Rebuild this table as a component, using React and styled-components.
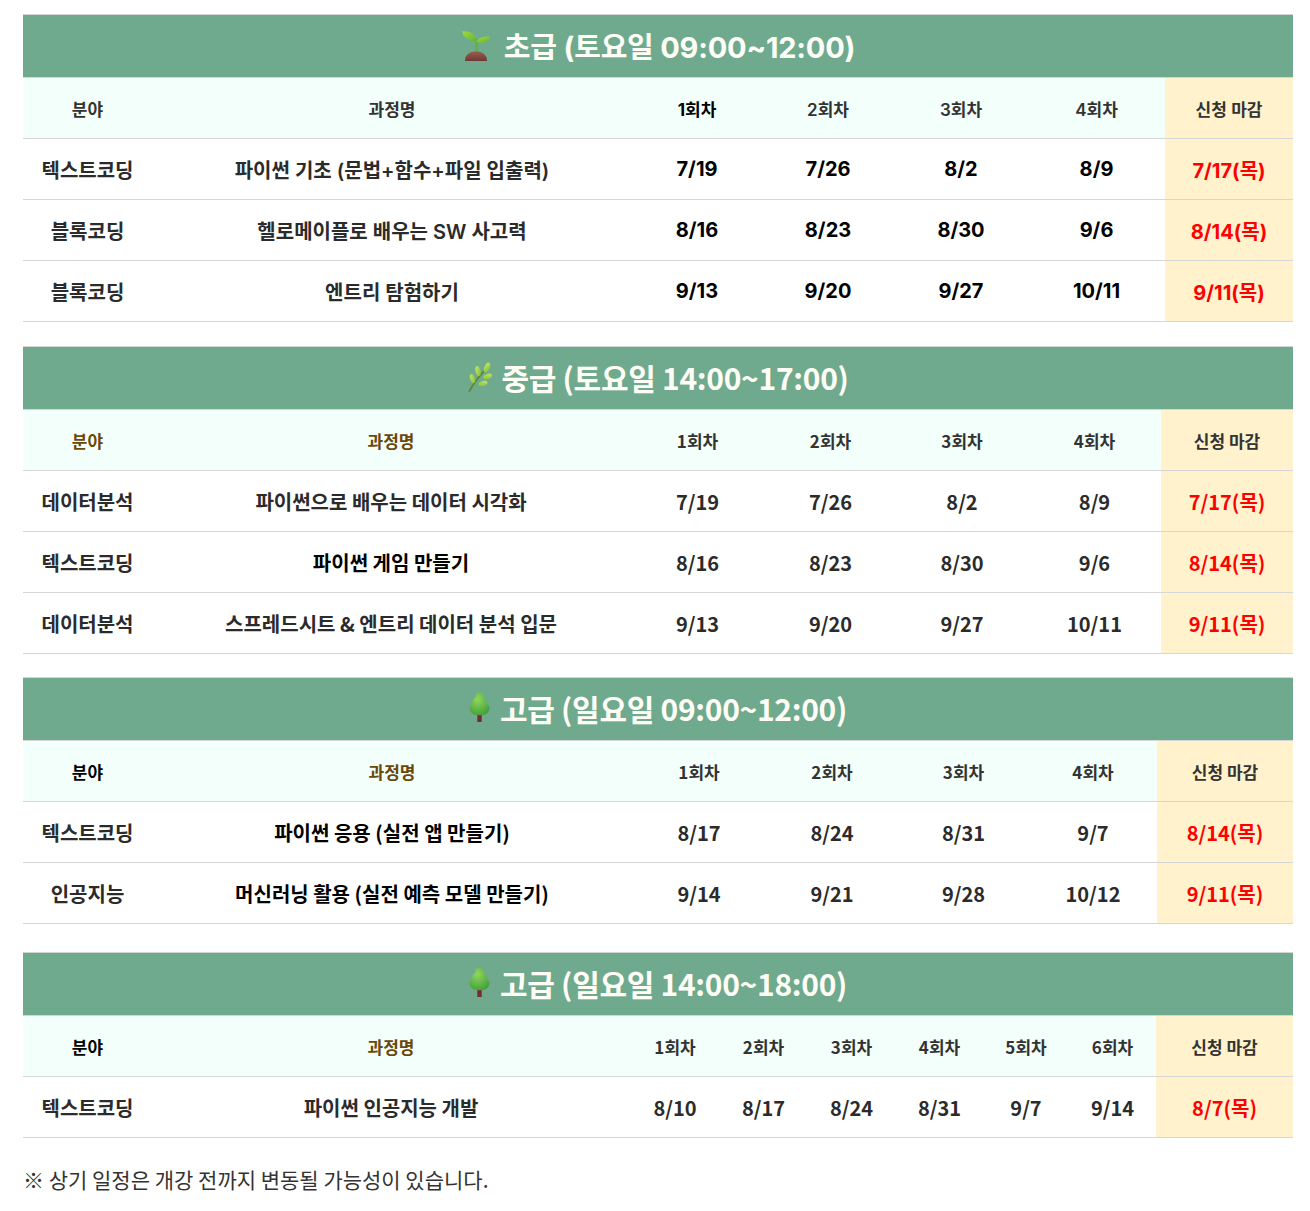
import React from 'react';
import styled, { createGlobalStyle } from 'styled-components';

const GlobalStyle = createGlobalStyle`
  html, body {
    margin: 0;
    padding: 0;
    background: #fff;
  }
  body {
    font-family: "Noto Sans CJK KR", "Noto Sans", sans-serif;
    color: #333;
  }
`;

const Page = styled.main`
  padding: 14px 17px 40px 23px;
`;

const Table = styled.table`
  width: 1270px;
  border-collapse: collapse;
  table-layout: fixed;
  margin-top: ${(p) => p.$space || 0}px;
  font-family: ${(p) =>
    p.$round
      ? '"Inter", "Noto Sans CJK KR", sans-serif'
      : '"Noto Sans CJK KR", "Noto Sans", sans-serif'};
`;

const Col = styled.col`
  width: ${(p) => p.$w}px;
`;

const TitleCell = styled.th`
  height: 62px;
  padding: 0;
  background: #6faa8e;
  border-top: 1px solid #d4d4d4;
  border-bottom: 1px solid #d6d6d6;
  color: #fffef6;
  font-size: ${(p) => (p.$round ? 29 : 30)}px;
  font-weight: 700;
  letter-spacing: ${(p) => (p.$round ? '-0.2px' : '-0.3px')};
`;

const TitleInner = styled.span`
  display: inline-flex;
  align-items: center;
  gap: ${(p) => p.$gap || 10}px;
`;

const HeadCell = styled.th`
  height: 60px;
  padding: 0;
  background: ${(p) => (p.$deadline ? '#fff2cc' : '#f2fffa')};
  border-bottom: 1px solid #d6d6d6;
  font-size: 17px;
  font-weight: ${(p) => (p.$strong ? 700 : 600)};
  color: ${(p) =>
    p.$tone === 'brown' ? '#6b4708' : p.$tone === 'black' ? '#000' : '#333'};
  text-align: center;
`;

const Cell = styled.td`
  height: 60px;
  padding: 0;
  background: ${(p) => (p.$deadline ? '#fff2cc' : '#fff')};
  border-bottom: 1px solid #d6d6d6;
  font-size: 20px;
  font-weight: ${(p) => (p.$strong ? 700 : 600)};
  color: ${(p) => (p.$deadline ? '#ff0000' : p.$strong ? '#000' : '#2b2b2b')};
  text-align: center;
  white-space: nowrap;
`;

const Note = styled.p`
  margin: 26px 0 0;
  font-size: 21px;
  font-weight: 400;
  color: #333;
`;

const Seedling = () => (
  <svg width="30" height="31" viewBox="0 0 30 31" aria-hidden="true">
    <defs>
      <linearGradient id="soil" x1="0" y1="0" x2="0" y2="1">
        <stop offset="0" stopColor="#9a5e50" />
        <stop offset="1" stopColor="#6d3834" />
      </linearGradient>
      <linearGradient id="leafA" x1="0" y1="0" x2="1" y2="1">
        <stop offset="0" stopColor="#a6d93c" />
        <stop offset="1" stopColor="#5cb534" />
      </linearGradient>
    </defs>
    <path d="M15.5 22 C15.5 18 15.5 14 16 10" stroke="#63b33a" strokeWidth="2.6" fill="none" strokeLinecap="round" />
    <path d="M16 11 C11 11.5 3 9.5 1 1.5 C7 0.5 14 3 16 11 Z" fill="url(#leafA)" />
    <path d="M15.5 12 C17 8 23 5.5 29.5 7 C28 12 21 14 15.5 12 Z" fill="url(#leafA)" />
    <path d="M4 31 C4 24 9 21.5 15 21.5 C21 21.5 26 24 26 31 Z" fill="url(#soil)" />
  </svg>
);

const Herb = () => (
  <svg width="25" height="30" viewBox="0 0 25 30" aria-hidden="true">
    <defs>
      <linearGradient id="herbLeaf" x1="0" y1="0" x2="1" y2="1">
        <stop offset="0" stopColor="#c8e86a" />
        <stop offset="1" stopColor="#82bf36" />
      </linearGradient>
    </defs>
    <path d="M2.5 29 C6 22 11 15 21 5" stroke="#5f8a32" strokeWidth="1.8" fill="none" strokeLinecap="round" />
    <ellipse cx="20" cy="5.5" rx="2.6" ry="5.2" transform="rotate(25 20 5.5)" fill="url(#herbLeaf)" />
    <ellipse cx="11" cy="9" rx="2.5" ry="5" transform="rotate(-15 11 9)" fill="url(#herbLeaf)" />
    <ellipse cx="20.5" cy="14.5" rx="2.4" ry="4.6" transform="rotate(70 20.5 14.5)" fill="url(#herbLeaf)" />
    <ellipse cx="5.5" cy="16.5" rx="2.3" ry="4.6" transform="rotate(-20 5.5 16.5)" fill="url(#herbLeaf)" />
    <ellipse cx="16" cy="21.5" rx="2.3" ry="4.6" transform="rotate(75 16 21.5)" fill="url(#herbLeaf)" />
  </svg>
);

const Tree = () => (
  <svg width="21" height="31" viewBox="0 0 21 31" aria-hidden="true">
    <defs>
      <radialGradient id="treeFill" cx="0.4" cy="0.3" r="0.8">
        <stop offset="0" stopColor="#8fd85a" />
        <stop offset="1" stopColor="#3f9a3a" />
      </radialGradient>
    </defs>
    <rect x="8.3" y="22" width="4.4" height="8" fill="#7a2a2c" />
    <path
      d="M10.5 0.5 C13.5 0.5 15 3 14.6 5.6 C17.3 6.5 18.4 9.4 17.4 11.8 C20.3 13 21.3 16.4 19.6 19.3 C18 22.3 14.5 23.3 10.5 23.3 C6.5 23.3 3 22.3 1.4 19.3 C-0.3 16.4 0.7 13 3.6 11.8 C2.6 9.4 3.7 6.5 6.4 5.6 C6 3 7.5 0.5 10.5 0.5 Z"
      fill="url(#treeFill)"
    />
  </svg>
);

const schedules = [
  {
    key: 'basic',
    icon: <Seedling />,
    gap: 13,
    title: '초급 (토요일 09:00~12:00)',
    round: true,
    space: 0,
    cols: [129, 480, 130, 132, 134, 137, 128],
    headTones: ['dark', 'dark', 'black'],
    rows: [
      { field: '텍스트코딩', course: '파이썬 기초 (문법+함수+파일 입출력)', dates: ['7/19', '7/26', '8/2', '8/9'], due: '7/17(목)' },
      { field: '블록코딩', course: '헬로메이플로 배우는 SW 사고력', dates: ['8/16', '8/23', '8/30', '9/6'], due: '8/14(목)' },
      { field: '블록코딩', course: '엔트리 탐험하기', dates: ['9/13', '9/20', '9/27', '10/11'], due: '9/11(목)' },
    ],
    strongDates: true,
  },
  {
    key: 'middle',
    icon: <Herb />,
    gap: 9,
    title: '중급 (토요일 14:00~17:00)',
    space: 24,
    cols: [129, 478, 135, 131, 132, 133, 132],
    headTones: ['brown', 'brown'],
    rows: [
      { field: '데이터분석', course: '파이썬으로 배우는 데이터 시각화', dates: ['7/19', '7/26', '8/2', '8/9'], due: '7/17(목)' },
      { field: '텍스트코딩', course: '파이썬 게임 만들기', strongCourse: true, dates: ['8/16', '8/23', '8/30', '9/6'], due: '8/14(목)' },
      { field: '데이터분석', course: '스프레드시트 & 엔트리 데이터 분석 입문', dates: ['9/13', '9/20', '9/27', '10/11'], due: '9/11(목)' },
    ],
  },
  {
    key: 'advanced-am',
    icon: <Tree />,
    gap: 10,
    title: '고급 (일요일 09:00~12:00)',
    space: 23,
    cols: [129, 480, 134, 132, 131, 128, 136],
    headTones: ['black', 'brown'],
    rows: [
      { field: '텍스트코딩', course: '파이썬 응용 (실전 앱 만들기)', strongCourse: true, dates: ['8/17', '8/24', '8/31', '9/7'], due: '8/14(목)' },
      { field: '인공지능', course: '머신러닝 활용 (실전 예측 모델 만들기)', strongCourse: true, dates: ['9/14', '9/21', '9/28', '10/12'], due: '9/11(목)' },
    ],
  },
  {
    key: 'advanced-pm',
    icon: <Tree />,
    gap: 10,
    title: '고급 (일요일 14:00~18:00)',
    space: 28,
    cols: [129, 478, 90, 87, 89, 87, 86, 87, 137],
    headTones: ['black', 'brown'],
    rows: [
      { field: '텍스트코딩', course: '파이썬 인공지능 개발', dates: ['8/10', '8/17', '8/24', '8/31', '9/7', '9/14'], due: '8/7(목)' },
    ],
  },
];

const ScheduleTable = ({ data }) => {
  const sessions = data.rows[0].dates.length;
  const labels = ['분야', '과정명'];
  return (
    <Table $space={data.space} $round={data.round}>
      <colgroup>
        {data.cols.map((w, i) => (
          <Col key={i} $w={w} />
        ))}
      </colgroup>
      <thead>
        <tr>
          <TitleCell colSpan={data.cols.length} $round={data.round}>
            <TitleInner $gap={data.gap}>
              {data.icon}
              <span>{data.title}</span>
            </TitleInner>
          </TitleCell>
        </tr>
        <tr>
          {labels.map((label, i) => (
            <HeadCell key={label} $tone={data.headTones[i]}>
              {label}
            </HeadCell>
          ))}
          {Array.from({ length: sessions }, (_, i) => (
            <HeadCell
              key={i}
              $tone={data.headTones[2 + i] || 'dark'}
              $strong={data.headTones[2 + i] === 'black'}
            >
              {i + 1}회차
            </HeadCell>
          ))}
          <HeadCell $deadline>신청 마감</HeadCell>
        </tr>
      </thead>
      <tbody>
        {data.rows.map((row, r) => (
          <tr key={r}>
            <Cell>{row.field}</Cell>
            <Cell $strong={row.strongCourse}>{row.course}</Cell>
            {row.dates.map((d) => (
              <Cell key={d} $strong={data.strongDates}>
                {d}
              </Cell>
            ))}
            <Cell $deadline $strong>
              {row.due}
            </Cell>
          </tr>
        ))}
      </tbody>
    </Table>
  );
};

const App = () => (
  <>
    <GlobalStyle />
    <Page>
      {schedules.map((s) => (
        <ScheduleTable key={s.key} data={s} />
      ))}
      <Note>※ 상기 일정은 개강 전까지 변동될 가능성이 있습니다.</Note>
    </Page>
  </>
);

export default App;
